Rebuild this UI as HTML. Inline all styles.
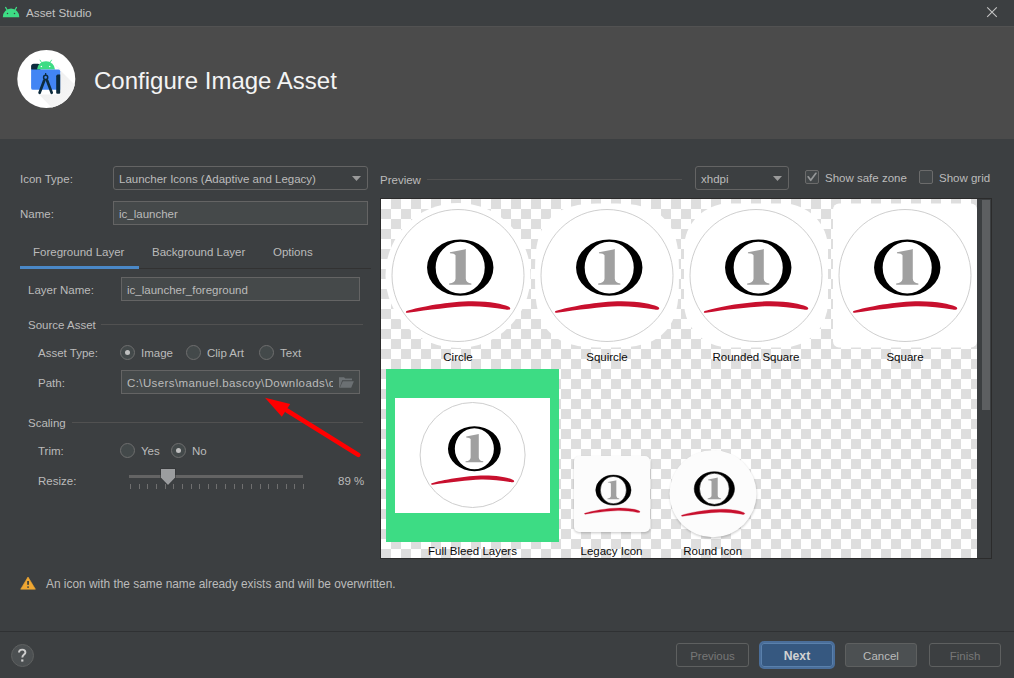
<!DOCTYPE html>
<html><head><meta charset="utf-8">
<style>
html,body{margin:0;padding:0;}
body{width:1014px;height:678px;overflow:hidden;background:#3c3f41;position:relative;font-family:"Liberation Sans",sans-serif;font-size:11.5px;color:#bbbbbb;}
.a{position:absolute;}
.t{position:absolute;white-space:nowrap;line-height:14px;}
.field{position:absolute;box-sizing:border-box;border:1px solid #646464;background:#45494a;}
.combo{position:absolute;box-sizing:border-box;border:1px solid #646464;border-radius:3px;background:transparent;}
.radio{position:absolute;box-sizing:border-box;width:15px;height:15px;border-radius:50%;border:1px solid #6e6e6e;background:#43494a;}
.radio.on::after{content:"";position:absolute;left:4px;top:4px;width:5px;height:5px;border-radius:50%;background:#c0c0c0;}
.cb{position:absolute;box-sizing:border-box;width:14px;height:14px;border-radius:2px;border:1px solid #6b6b6b;background:rgba(80,86,88,0.35);}
.btn{position:absolute;box-sizing:border-box;height:24px;border:1px solid #5e6060;border-radius:3px;text-align:center;line-height:24px;}
.sep{position:absolute;height:1px;background:#515151;}
svg{position:absolute;left:0;top:0;}
</style></head>
<body>
<!-- title bar -->
<svg width="1014" height="26" viewBox="0 0 1014 26">
  <g fill="#3ddc84">
    <path d="M2.8 17.2 A8.25 8.6 0 0 1 19.3 17.2 Z"/>
    <path d="M5.6 7.4 L7.3 10.4" stroke="#3ddc84" stroke-width="1.2" stroke-linecap="round"/>
    <path d="M16.5 7.4 L14.8 10.4" stroke="#3ddc84" stroke-width="1.2" stroke-linecap="round"/>
    <circle cx="7.5" cy="13.4" r="0.75" fill="#3c3f41"/>
    <circle cx="14.5" cy="13.4" r="0.75" fill="#3c3f41"/>
  </g>
  <path d="M987.2 7.3 L996.8 16.8 M996.8 7.3 L987.2 16.8" stroke="#c4c4c4" stroke-width="1.1"/>
</svg>
<div class="t" style="left:26px;top:6px;font-size:11.7px;color:#c2c2c2;">Asset Studio</div>

<!-- header -->
<div class="a" style="left:0;top:26px;width:1014px;height:113px;background:#4b4b4b;"></div>
<div class="a" style="left:0;top:26px;width:1014px;height:1px;background:#525252;"></div>
<svg width="1014" height="139" viewBox="0 0 1014 139">
  <defs><clipPath id="hc"><circle cx="46.3" cy="78.9" r="29"/></clipPath></defs>
  <circle cx="46.3" cy="78.9" r="29" fill="#ffffff"/>
  <defs><linearGradient id="shg" x1="0" y1="0" x2="1" y2="1"><stop offset="0" stop-color="#ececec"/><stop offset="1" stop-color="#fafafa"/></linearGradient></defs>
  <g clip-path="url(#hc)">
    <path d="M54 64 L60.3 69 L60.3 94.4 L39 94.4 L54 110 L90 110 L90 100 Z" fill="url(#shg)"/>
  </g>
  <rect x="31.1" y="63.7" width="9.5" height="7.5" rx="2.8" fill="#0d2b3d"/>
  <path d="M37 69.6 A9 8.3 0 0 1 55 69.6 Z" fill="#3ddc84"/>
  <path d="M39.9 59.8 L41.7 62.8 M51.7 59.8 L49.9 62.8" stroke="#3ddc84" stroke-width="0.9"/>
  <circle cx="41.4" cy="66.5" r="0.75" fill="#fff"/>
  <circle cx="49.7" cy="66.5" r="0.75" fill="#fff"/>
  <path d="M31.1 69.6 L58.6 69.6 Q60.2 69.6 60.2 71.2 L60.2 89.8 L33 89.8 Q31.1 89.8 31.1 87.9 Z" fill="#4285f4"/>
  <path d="M56.2 76.2 Q56.2 74.6 57.8 74.6 L60.2 74.6 L60.2 92.8 Q60.2 93.8 59.2 93.8 L57.2 93.8 Q56.2 93.8 56.2 92.8 Z" fill="#0d2b3d"/>
  <circle cx="45.66" cy="77.4" r="2.05" fill="none" stroke="#0d2b3d" stroke-width="1.5"/>
  <path d="M45.66 73 L45.66 75.5" stroke="#0d2b3d" stroke-width="1.2"/>
  <path d="M44.2 80.6 L39.6 92.8 M47.1 80.6 L51.7 92.8" stroke="#0d2b3d" stroke-width="2.7" stroke-linecap="round"/>
</svg>
<div class="t" style="left:94px;top:67px;font-size:24px;line-height:28px;color:#f4f4f4;">Configure Image Asset</div>

<!-- left form -->
<div class="t" style="left:20px;top:172px;">Icon Type:</div>
<div class="combo" style="left:113px;top:166px;width:255px;height:24px;"></div>
<div class="t" style="left:119px;top:172px;">Launcher Icons (Adaptive and Legacy)</div>

<div class="t" style="left:20px;top:207px;">Name:</div>
<div class="field" style="left:113px;top:201px;width:255px;height:24px;"></div>
<div class="t" style="left:119px;top:207px;">ic_launcher</div>

<div class="t" style="left:33px;top:245px;">Foreground Layer</div>
<div class="t" style="left:152px;top:245px;">Background Layer</div>
<div class="t" style="left:273px;top:245px;">Options</div>
<div class="a" style="left:20px;top:268px;width:351px;height:1px;background:#323232;"></div>
<div class="a" style="left:20px;top:266px;width:119px;height:3px;background:#4a88c7;"></div>

<div class="t" style="left:28px;top:283px;">Layer Name:</div>
<div class="field" style="left:121px;top:277px;width:239px;height:24px;"></div>
<div class="t" style="left:127px;top:283px;">ic_launcher_foreground</div>

<div class="t" style="left:28px;top:318px;">Source Asset</div>
<div class="sep" style="left:101px;top:324px;width:262px;"></div>
<div class="t" style="left:38px;top:346px;">Asset Type:</div>
<div class="radio on" style="left:120px;top:345px;"></div>
<div class="t" style="left:141px;top:346px;">Image</div>
<div class="radio" style="left:186px;top:345px;"></div>
<div class="t" style="left:207px;top:346px;">Clip Art</div>
<div class="radio" style="left:259px;top:345px;"></div>
<div class="t" style="left:280px;top:346px;">Text</div>

<div class="t" style="left:38px;top:376px;">Path:</div>
<div class="field" style="left:121px;top:370px;width:239px;height:24px;"></div>
<div class="t" style="left:127px;top:376px;width:206px;overflow:hidden;letter-spacing:0.4px;">C:\Users\manuel.bascoy\Downloads\co</div>

<div class="t" style="left:28px;top:416px;">Scaling</div>
<div class="sep" style="left:72px;top:422px;width:291px;"></div>
<div class="t" style="left:38px;top:444px;">Trim:</div>
<div class="radio" style="left:120px;top:443px;"></div>
<div class="t" style="left:141px;top:444px;">Yes</div>
<div class="radio on" style="left:171px;top:443px;"></div>
<div class="t" style="left:192px;top:444px;">No</div>
<div class="t" style="left:38px;top:474px;">Resize:</div>
<div class="t" style="left:338px;top:474px;">89 %</div>

<svg width="1014" height="678" viewBox="0 0 1014 678">
  <!-- folder icon -->
  <path d="M339 377.2 L344 377.2 L345.3 378.6 L352 378.6 L352 380.3 L342.2 380.3 L339.6 387.8 L339 387.8 Z" fill="#6b7073"/>
  <path d="M342.8 381.2 L353.9 381.2 L351.2 387.8 L339.8 387.8 Z" fill="#6b7073"/>
  <!-- slider -->
  <rect x="129" y="475" width="174" height="3" fill="#646464"/>
  <rect x="130" y="484" width="1" height="5" fill="#6f6f6f"/><rect x="139" y="484" width="1" height="5" fill="#6f6f6f"/><rect x="147" y="484" width="1" height="5" fill="#6f6f6f"/><rect x="156" y="484" width="1" height="5" fill="#6f6f6f"/><rect x="165" y="484" width="1" height="5" fill="#6f6f6f"/><rect x="173" y="484" width="1" height="5" fill="#6f6f6f"/><rect x="182" y="484" width="1" height="5" fill="#6f6f6f"/><rect x="191" y="484" width="1" height="5" fill="#6f6f6f"/><rect x="199" y="484" width="1" height="5" fill="#6f6f6f"/><rect x="208" y="484" width="1" height="5" fill="#6f6f6f"/><rect x="216" y="484" width="1" height="5" fill="#6f6f6f"/><rect x="225" y="484" width="1" height="5" fill="#6f6f6f"/><rect x="234" y="484" width="1" height="5" fill="#6f6f6f"/><rect x="242" y="484" width="1" height="5" fill="#6f6f6f"/><rect x="251" y="484" width="1" height="5" fill="#6f6f6f"/><rect x="260" y="484" width="1" height="5" fill="#6f6f6f"/><rect x="268" y="484" width="1" height="5" fill="#6f6f6f"/><rect x="277" y="484" width="1" height="5" fill="#6f6f6f"/><rect x="286" y="484" width="1" height="5" fill="#6f6f6f"/><rect x="294" y="484" width="1" height="5" fill="#6f6f6f"/><rect x="303" y="484" width="1" height="5" fill="#6f6f6f"/>
  <path d="M160.5 468.5 L175.5 468.5 L175.5 478 L168 485.6 L160.5 478 Z" fill="#2f3133"/>
  <path d="M161 469 L175 469 L175 477.8 L168 485 L161 477.8 Z" fill="#9b9d9f"/>
  <!-- checkbox check -->
  <path d="M808.2 176.8 L810.7 180.3 L815.9 173.3" fill="none" stroke="#bbbbbb" stroke-width="1.7" stroke-linecap="round" stroke-linejoin="round"/>
  <!-- combo arrows -->
  <path d="M352 176 L361 176 L356.5 181 Z" fill="#9a9a9a"/>
  <path d="M773 176 L782 176 L777.5 181 Z" fill="#9a9a9a"/>
  <!-- warning -->
  <path d="M28 577 L35.4 589.2 L20.7 589.2 Z" fill="#f0a732" stroke="#f0a732" stroke-width="0.6" stroke-linejoin="round"/>
  <rect x="27.3" y="581" width="1.5" height="3.8" fill="#23303c"/>
  <rect x="27.3" y="586.4" width="1.5" height="1.4" fill="#23303c"/>
  <!-- red arrow -->
  <path d="M287 410.5 L358.3 454.9" stroke="#ff0000" stroke-width="4.6" stroke-linecap="round"/>
  <path d="M265 397.8 L290.2 404 L281.8 416.8 Z" fill="#ff0000"/>
</svg>

<!-- preview -->
<div class="t" style="left:380px;top:173px;">Preview</div>
<div class="sep" style="left:427px;top:179px;width:255px;"></div>
<div class="combo" style="left:695px;top:166px;width:94px;height:24px;"></div>
<div class="t" style="left:701px;top:172px;">xhdpi</div>
<div class="cb" style="left:805px;top:170px;"></div>
<div class="t" style="left:825px;top:171px;">Show safe zone</div>
<div class="cb" style="left:919px;top:170px;"></div>
<div class="t" style="left:939px;top:171px;">Show grid</div>

<div class="a" style="left:380px;top:198px;width:612px;height:361px;background:#2b2b2b;"></div>
<div class="a" style="left:977px;top:199px;width:14px;height:359px;background:#3c3f41;"></div>
<div class="a" style="left:982px;top:200px;width:8px;height:210px;background:#5d5f61;"></div>
<div class="a" style="left:381px;top:199px;width:596px;height:359px;background:conic-gradient(#dedede 0 25%,#ffffff 0 50%,#dedede 0 75%,#ffffff 0) 0 0/20px 20px;"></div>
<svg width="1014" height="678" viewBox="0 0 1014 678">
  <defs>
    <clipPath id="pc"><rect x="381" y="199" width="596" height="359"/></clipPath>
    <filter id="blur" x="-20%" y="-20%" width="140%" height="140%"><feGaussianBlur stdDeviation="1.2"/></filter>
    <symbol id="logo" viewBox="0 0 894 678">
      <path fill-rule="evenodd" fill="#000" d="M208.4 289.8 A255.9 217.3 0 1 0 720.2 289.8 A255.9 217.3 0 1 0 208.4 289.8 Z M274.8 289.8 A189.2 198.8 0 1 1 653.2 289.8 A189.2 198.8 0 1 1 274.8 289.8 Z"/>
      <path fill="#a0a0a0" d="M385 171 L496 150 L507 147 L507 375 Q510 408 550 412 L550 421 L379 421 L379 412 Q425 408 428 375 L428 195 Q420 182 385 180 Z"/>
      <path fill="#c8102e" d="M50 625 C 150 592, 380 550, 560 549 C 700 550, 790 570, 835 590 C 862 601, 850 622, 815 613 C 720 598, 620 585, 529 587 C 400 592, 220 614, 60 638 Q 36 640 50 625 Z"/>
    </symbol>
    <symbol id="logoS" viewBox="0 0 894 678">
      <path fill-rule="evenodd" fill="#000" stroke="#000" stroke-width="7" d="M208.4 289.8 A255.9 217.3 0 1 0 720.2 289.8 A255.9 217.3 0 1 0 208.4 289.8 Z M274.8 289.8 A189.2 198.8 0 1 1 653.2 289.8 A189.2 198.8 0 1 1 274.8 289.8 Z"/>
      <path fill="#a0a0a0" d="M385 171 L496 150 L507 147 L507 375 Q510 408 550 412 L550 421 L379 421 L379 412 Q425 408 428 375 L428 195 Q420 182 385 180 Z"/>
      <path fill="#c8102e" stroke="#c8102e" stroke-width="4" d="M50 625 C 150 592, 380 550, 560 549 C 700 550, 790 570, 835 590 C 862 601, 850 622, 815 613 C 720 598, 620 585, 529 587 C 400 592, 220 614, 60 638 Q 36 640 50 625 Z"/>
    </symbol>
  </defs>
  <g clip-path="url(#pc)">
<circle cx="458" cy="275.5" r="72.5" fill="#fff"/>
<path d="M679.0 275.5 L678.9 285.6 L678.7 291.5 L678.4 296.4 L677.9 300.8 L677.4 304.7 L676.6 308.4 L675.8 311.8 L674.8 315.0 L673.7 318.0 L672.4 320.9 L671.0 323.5 L669.5 326.0 L667.9 328.4 L666.1 330.6 L664.1 332.6 L662.1 334.6 L659.9 336.4 L657.5 338.0 L655.0 339.5 L652.4 340.9 L649.5 342.2 L646.5 343.3 L643.3 344.3 L639.9 345.1 L636.2 345.9 L632.3 346.4 L627.9 346.9 L623.0 347.2 L617.1 347.4 L607.0 347.5 L596.9 347.4 L591.0 347.2 L586.1 346.9 L581.7 346.4 L577.8 345.9 L574.1 345.1 L570.7 344.3 L567.5 343.3 L564.5 342.2 L561.6 340.9 L559.0 339.5 L556.5 338.0 L554.1 336.4 L551.9 334.6 L549.9 332.6 L547.9 330.6 L546.1 328.4 L544.5 326.0 L543.0 323.5 L541.6 320.9 L540.3 318.0 L539.2 315.0 L538.2 311.8 L537.4 308.4 L536.6 304.7 L536.1 300.8 L535.6 296.4 L535.3 291.5 L535.1 285.6 L535.0 275.5 L535.1 265.4 L535.3 259.5 L535.6 254.6 L536.1 250.2 L536.6 246.3 L537.4 242.6 L538.2 239.2 L539.2 236.0 L540.3 233.0 L541.6 230.1 L543.0 227.5 L544.5 225.0 L546.1 222.6 L547.9 220.4 L549.9 218.4 L551.9 216.4 L554.1 214.6 L556.5 213.0 L559.0 211.5 L561.6 210.1 L564.5 208.8 L567.5 207.7 L570.7 206.7 L574.1 205.9 L577.8 205.1 L581.7 204.6 L586.1 204.1 L591.0 203.8 L596.9 203.6 L607.0 203.5 L617.1 203.6 L623.0 203.8 L627.9 204.1 L632.3 204.6 L636.2 205.1 L639.9 205.9 L643.3 206.7 L646.5 207.7 L649.5 208.8 L652.4 210.1 L655.0 211.5 L657.5 213.0 L659.9 214.6 L662.1 216.4 L664.1 218.4 L666.1 220.4 L667.9 222.6 L669.5 225.0 L671.0 227.5 L672.4 230.1 L673.7 233.0 L674.8 236.0 L675.8 239.2 L676.6 242.6 L677.4 246.3 L677.9 250.2 L678.4 254.6 L678.7 259.5 L678.9 265.4Z" fill="#fff"/>
<rect x="684" y="203.5" width="144" height="144" rx="45" fill="#fff"/>
<rect x="833" y="203.5" width="144" height="144" rx="6" fill="#fff"/>
<circle cx="458" cy="275.5" r="66" fill="none" stroke="#c8c8c8" stroke-width="0.9"/>
<use href="#logo" x="400.00" y="230.00" width="116.00" height="88.00"/>
<circle cx="607" cy="275.5" r="66" fill="none" stroke="#c8c8c8" stroke-width="0.9"/>
<use href="#logo" x="549.00" y="230.00" width="116.00" height="88.00"/>
<circle cx="756" cy="275.5" r="66" fill="none" stroke="#c8c8c8" stroke-width="0.9"/>
<use href="#logo" x="698.00" y="230.00" width="116.00" height="88.00"/>
<circle cx="905" cy="275.5" r="66" fill="none" stroke="#c8c8c8" stroke-width="0.9"/>
<use href="#logo" x="847.00" y="230.00" width="116.00" height="88.00"/>
<text x="458" y="361" font-family="Liberation Sans" font-size="11.5" fill="#0a0a0a" text-anchor="middle">Circle</text>
<text x="607" y="361" font-family="Liberation Sans" font-size="11.5" fill="#0a0a0a" text-anchor="middle">Squircle</text>
<text x="756" y="361" font-family="Liberation Sans" font-size="11.5" fill="#0a0a0a" text-anchor="middle">Rounded Square</text>
<text x="905" y="361" font-family="Liberation Sans" font-size="11.5" fill="#0a0a0a" text-anchor="middle">Square</text>
<rect x="386" y="369" width="173" height="173" fill="#3ddc84"/>
<rect x="395" y="398" width="155" height="115" fill="#fff"/>
<circle cx="472.6" cy="455" r="52.5" fill="none" stroke="#c8c8c8" stroke-width="0.9"/>
<use href="#logo" x="426.46" y="418.81" width="92.27" height="70.00"/>
<rect x="574" y="457.2" width="76.5" height="76" rx="5" fill="#000" opacity="0.2" filter="url(#blur)"/>
<rect x="574" y="456" width="76" height="76" rx="5" fill="#fcfcfc"/>
<use href="#logoS" x="581.35" y="470.10" width="61.69" height="46.80"/>
<circle cx="713.3" cy="495" r="43.5" fill="#000" opacity="0.2" filter="url(#blur)"/>
<circle cx="713" cy="493.7" r="43.5" fill="#fcfcfc"/>
<use href="#logoS" x="677.85" y="466.02" width="70.30" height="53.33"/>
<text x="472.5" y="555" font-family="Liberation Sans" font-size="11.5" fill="#0a0a0a" text-anchor="middle">Full Bleed Layers</text>
<text x="611.5" y="555" font-family="Liberation Sans" font-size="11.5" fill="#0a0a0a" text-anchor="middle">Legacy Icon</text>
<text x="712.7" y="555" font-family="Liberation Sans" font-size="11.5" fill="#0a0a0a" text-anchor="middle">Round Icon</text>
  </g>
</svg>

<!-- warning text -->
<div class="t" style="left:46px;top:577px;font-size:11.9px;">An icon with the same name already exists and will be overwritten.</div>

<!-- footer -->
<div class="a" style="left:0;top:631px;width:1014px;height:1px;background:#2f3133;"></div>
<div class="a" style="left:11px;top:644px;width:23px;height:23px;box-sizing:border-box;border-radius:50%;border:1px solid #5e6060;background:#4c5052;"></div>
<svg width="1014" height="678" viewBox="0 0 1014 678"><path d="M19 652.6 C19 650.6 20.3 649.6 22.2 649.6 C24.1 649.6 25.4 650.7 25.4 652.4 C25.4 654.4 22.3 654.8 22.3 657.4" fill="none" stroke="#cdcdcd" stroke-width="1.9"/><rect x="21.2" y="659.4" width="2.2" height="2.2" fill="#cdcdcd"/></svg>
<div class="btn" style="left:676px;top:643px;width:73px;color:#777777;">Previous</div>
<div class="a" style="left:759px;top:641px;width:76px;height:28px;box-sizing:border-box;border:2px solid #4a6e9a;border-radius:5px;background:#365880;"></div>
<div class="a" style="left:761px;top:643px;width:72px;height:24px;box-sizing:border-box;border:1px solid #5a80ab;border-radius:3px;background:#365880;color:#d2d2d2;font-weight:bold;font-size:12.2px;line-height:24px;text-align:center;">Next</div>
<div class="btn" style="left:845px;top:643px;width:72px;background:#4c5052;">Cancel</div>
<div class="btn" style="left:929px;top:643px;width:72px;color:#777777;">Finish</div>
</body></html>
